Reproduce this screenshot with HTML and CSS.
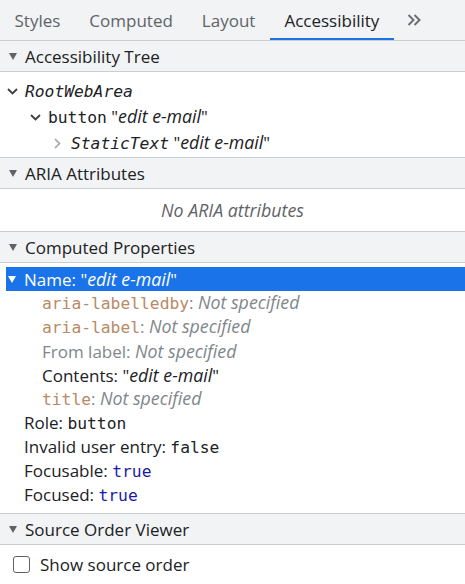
FILE: index.html
```html
<!DOCTYPE html>
<html>
<head>
<meta charset="utf-8">
<link rel="stylesheet" href="styles.css">
</head>
<body>
<div class="tabbar">
  <div class="tab">Styles</div>
  <div class="tab">Computed</div>
  <div class="tab">Layout</div>
  <div class="tab active">Accessibility</div>
  <div class="more"><svg width="14" height="12" viewBox="0 0 14 12"><path d="M1.5 1 L6.5 6 L1.5 11 M7.5 1 L12.5 6 L7.5 11" fill="none" stroke="#6b6f74" stroke-width="2"/></svg></div>
</div>

<section class="pane">
  <div class="header"><svg class="tri" width="8" height="7" viewBox="0 0 8 7"><polygon points="0,0 8,0 4,7" fill="#5f6368"/></svg><span>Accessibility Tree</span></div>
  <div class="tree">
    <div class="node l0"><span class="chev"><svg width="11" height="7" viewBox="0 0 11 7"><path d="M1 1 L5.5 5.5 L10 1" fill="none" stroke="#3c4043" stroke-width="1.8"/></svg></span><span class="txt"><span class="mono it">RootWebArea</span></span></div>
    <div class="node l1"><span class="chev"><svg width="11" height="7" viewBox="0 0 11 7"><path d="M1 1 L5.5 5.5 L10 1" fill="none" stroke="#3c4043" stroke-width="1.8"/></svg></span><span class="txt"><span class="mono">button</span> "<i>edit e-mail</i>"</span></div>
    <div class="node l2"><span class="chev"><svg class="right" width="7" height="11" viewBox="0 0 7 11"><path d="M1 1 L5.5 5.5 L1 10" fill="none" stroke="#a0a4a8" stroke-width="1.6"/></svg></span><span class="txt"><span class="mono it">StaticText</span> "<i>edit e-mail</i>"</span></div>
  </div>
</section>

<section class="pane">
  <div class="header"><svg class="tri" width="8" height="7" viewBox="0 0 8 7"><polygon points="0,0 8,0 4,7" fill="#5f6368"/></svg><span>ARIA Attributes</span></div>
  <div class="empty"><i>No ARIA attributes</i></div>
</section>

<section class="pane">
  <div class="header"><svg class="tri" width="8" height="7" viewBox="0 0 8 7"><polygon points="0,0 8,0 4,7" fill="#5f6368"/></svg><span>Computed Properties</span></div>
  <div class="props">
    <div class="prop selected"><svg class="tri sel" width="8" height="7" viewBox="0 0 8 7"><polygon points="0,0 8,0 4,7" fill="#ffffff"/></svg><span class="txt">Name: "<i>edit e-mail</i>"</span></div>
    <div class="prop sub"><span class="txt dim"><span class="mono attr">aria-labelledby</span>: <i>Not specified</i></span></div>
    <div class="prop sub"><span class="txt dim"><span class="mono attr">aria-label</span>: <i>Not specified</i></span></div>
    <div class="prop sub"><span class="txt dim">From label: <i>Not specified</i></span></div>
    <div class="prop sub"><span class="txt">Contents: "<i>edit e-mail</i>"</span></div>
    <div class="prop sub"><span class="txt dim"><span class="mono attr">title</span>: <i>Not specified</i></span></div>
    <div class="prop top"><span class="txt">Role: <span class="mono">button</span></span></div>
    <div class="prop top"><span class="txt">Invalid user entry: <span class="mono">false</span></span></div>
    <div class="prop top"><span class="txt">Focusable: <span class="mono atom">true</span></span></div>
    <div class="prop top"><span class="txt">Focused: <span class="mono atom">true</span></span></div>
  </div>
</section>

<section class="pane last">
  <div class="header"><svg class="tri" width="8" height="7" viewBox="0 0 8 7"><polygon points="0,0 8,0 4,7" fill="#5f6368"/></svg><span>Source Order Viewer</span></div>
  <label class="check"><span class="box"></span><span>Show source order</span></label>
</section>
</body>
</html>
```

FILE: styles.css
```css
html, body {
  margin: 0;
  padding: 0;
  background: #ffffff;
}
body {
  width: 465px;
  height: 584px;
  overflow: hidden;
  font-family: "Open Sans", "Noto Sans", sans-serif;
  font-size: 17px;
  color: #202124;
}
i {
  font-style: italic;
  font-size: 17.8px;
}

.tabbar {
  display: flex;
  align-items: stretch;
  height: 40px;
  background: #f1f3f4;
  border-bottom: 1px solid #cacdd1;
}
.tab {
  padding: 0 14.5px;
  line-height: 41px;
  color: #5f6368;
  font-size: 17px;
}
.tab.active {
  color: #202124;
  box-shadow: inset 0 -2px 0 #1a73e8;
}
.more {
  display: flex;
  align-items: center;
  padding-left: 13px;
}

.pane {
  border-bottom: 1px solid #cacdd1;
}
.pane.last { border-bottom: none; }
.header {
  display: flex;
  align-items: center;
  height: 30px;
  background: #f1f3f4;
  border-bottom: 1px solid #cacdd1;
  padding-left: 9px;
  font-size: 17px;
  color: #202124;
}
.tri { margin-right: 8px; flex: none; }

.txt {
  white-space: pre;
  line-height: 24px;
}
.mono {
  font-family: "DejaVu Sans Mono", "Liberation Mono", monospace;
  font-size: 16.3px;
}
.it { font-style: italic; }

.tree {
  padding: 6px 0 1px;
}
.node {
  display: flex;
  align-items: center;
  height: 26px;
  white-space: nowrap;
}
.node.l0 { padding-left: 7px; }
.node.l1 { padding-left: 30px; }
.node.l2 { padding-left: 53px; }
.chev {
  width: 18px;
  flex: none;
  display: flex;
  align-items: center;
}
.chev .right { margin-left: 1px; }

.empty {
  height: 42px;
  display: flex;
  align-items: center;
  justify-content: center;
  color: #5f6368;
}

.props {
  padding: 4px 0 6px;
}
.prop {
  display: flex;
  align-items: center;
  height: 24px;
  white-space: nowrap;
}
.prop.selected {
  margin-left: 6px;
  padding-left: 2px;
  background: #1a73e8;
  color: #ffffff;
}
.prop.selected .tri { margin-right: 8px; }
.prop.sub { padding-left: 42px; }
.prop.top { padding-left: 24px; }
.attr { color: #b98a66; }
.dim { color: #80868b; }
.atom { color: #1a1aa6; }

.check {
  display: flex;
  align-items: center;
  height: 39px;
  padding-left: 13px;
}
.box {
  box-sizing: border-box;
  width: 17px;
  height: 17px;
  border: 1.5px solid #5f6368;
  border-radius: 3px;
  margin-right: 10px;
}
```
